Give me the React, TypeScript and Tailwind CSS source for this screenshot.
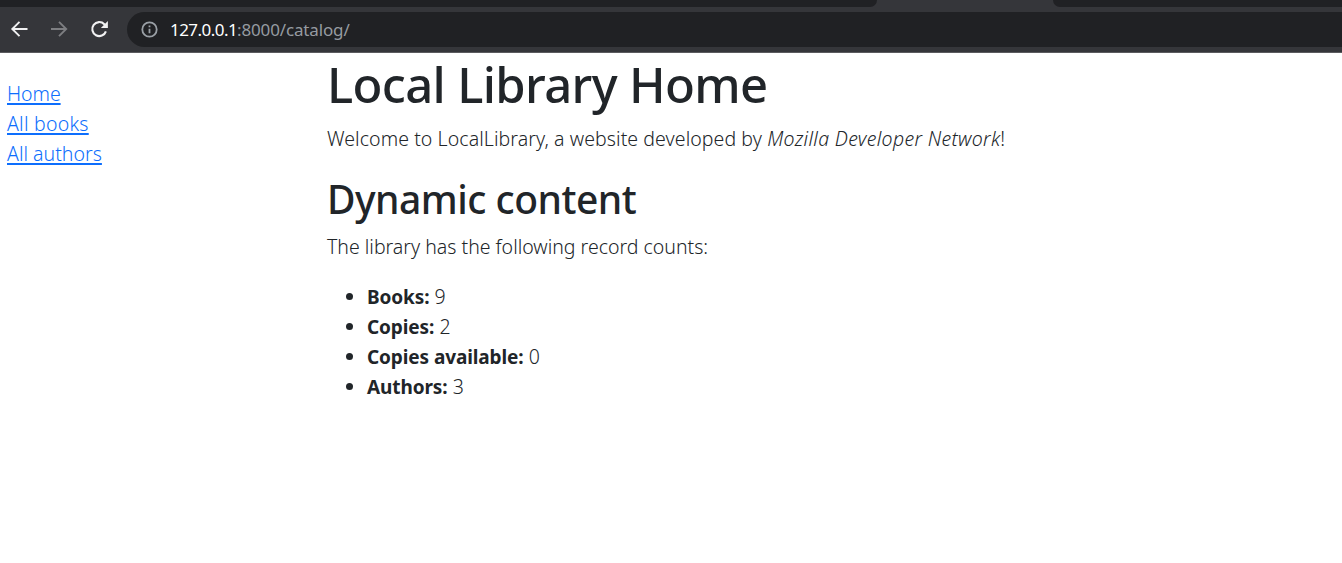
const links = [
  { label: "Home", spacing: "tracking-[-0.05px]" },
  { label: "All books", spacing: "tracking-[0.25px]" },
  { label: "All authors", spacing: "tracking-[0.02px]" },
];

const counts = [
  { label: "Books:", value: 9 },
  { label: "Copies:", value: 2 },
  { label: "Copies available:", value: 0 },
  { label: "Authors:", value: 3 },
];

function BrowserBar() {
  return (
    <header className="h-[53px] border-b border-[#5b5b5f] bg-[#35363a]">
      <div className="flex h-[7px] justify-between">
        <div className="w-[877px] rounded-br-[10px] bg-[#202124]" />
        <div className="w-[289px] rounded-bl-[10px] bg-[#202124]" />
      </div>
      <div className="flex h-[45px] items-center pb-px">
        <svg className="ml-[10px] h-[18px] w-[18px] shrink-0" viewBox="0 0 18 18" fill="none" stroke="#f1f1f2" strokeWidth="1.9">
          <path d="M17.5 9H2.5M9.5 1.8L2.3 9l7.2 7.2" />
        </svg>
        <svg className="ml-[22px] h-[18px] w-[18px] shrink-0" viewBox="0 0 18 18" fill="none" stroke="#7d7e81" strokeWidth="1.9">
          <path d="M1 9h15M9 1.8L16.2 9 9 16.2" />
        </svg>
        <svg className="ml-[21px] h-[18px] w-[20px] shrink-0" viewBox="0 0 20 18" fill="none">
          <path d="M16.9 11.3A7 7 0 1 1 15.3 4.2l1.5 1.6" stroke="#f1f1f2" strokeWidth="2.1" />
          <path d="M18.9 1v7h-7z" fill="#f1f1f2" />
        </svg>
        <div className="ml-[18px] flex h-[35px] flex-1 items-center rounded-l-full bg-[#202124] pl-[14px]">
          <svg className="h-[17px] w-[17px]" viewBox="0 0 17 17" fill="none" stroke="#9aa0a6" strokeWidth="1.8">
            <circle cx="8.5" cy="8.5" r="7.2" />
            <path d="M8.5 7.7v4.6M8.5 4.6v1.7" />
          </svg>
          <div className="ml-[12px] pt-px whitespace-nowrap text-[17px] leading-[24px] text-[#969ba1]">
            <span className="tracking-[-0.55px] text-white">127.0.0.1</span>
            <span className="tracking-[-0.15px]">:8000/catalog/</span>
          </div>
        </div>
      </div>
    </header>
  );
}

export default function App() {
  return (
    <div className="h-[563px] overflow-hidden bg-white font-['Noto_Sans',sans-serif] text-[19.5px] leading-[30px] text-[#212529]">
      <BrowserBar />
      <div className="flex">
        <nav className="w-[327px] shrink-0 pl-[7px] pt-[26px]">
          <ul>
            {links.map((link) => (
              <li key={link.label}>
                <a href="#" className={`font-[350] text-[#0d6efd] underline decoration-2 underline-offset-2 ${link.spacing}`}>
                  {link.label}
                </a>
              </li>
            ))}
          </ul>
        </nav>
        <main className="whitespace-nowrap">
          <h1 className="mb-[10px] pt-px text-[49px] font-medium leading-[60px] tracking-[-0.65px]">Local Library Home</h1>
          <p className="mb-[20px] font-[350] tracking-[0.08px]">
            Welcome to LocalLibrary, a website developed by <em className="tracking-[0.33px]">Mozilla Developer Network</em>!
          </p>
          <h2 className="mb-[9px] pt-px text-[39px] font-medium leading-[48px] tracking-[-0.5px]">Dynamic content</h2>
          <p className="mb-[20px] font-[350]">The library has the following record counts:</p>
          <ul className="list-disc pl-[40px]">
            {counts.map((count) => (
              <li key={count.label}>
                <strong className="text-[19px] font-bold tracking-[-0.1px]">{count.label}</strong>{" "}
                <span className="font-[350]">{count.value}</span>
              </li>
            ))}
          </ul>
        </main>
      </div>
    </div>
  );
}
